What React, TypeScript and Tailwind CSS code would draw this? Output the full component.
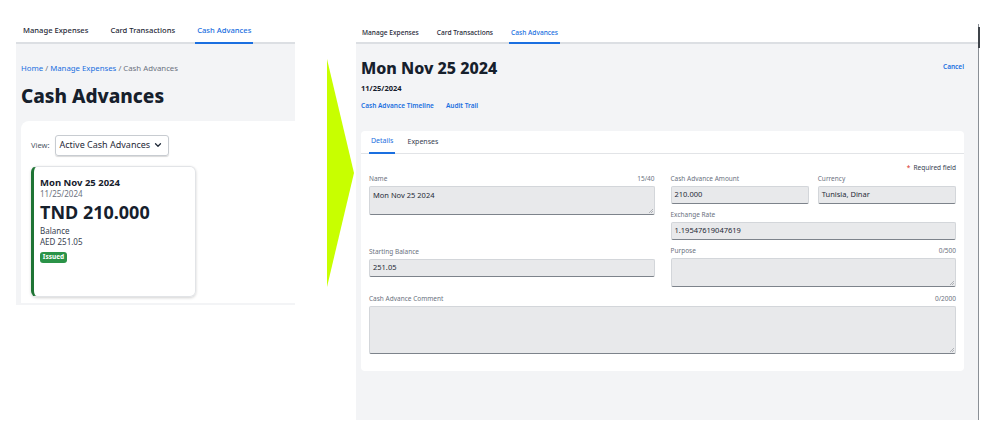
import { ChevronDown } from "lucide-react";

const blue = "text-[#1a6fe0]";

function Field({
  label,
  value,
  counter,
  h = "h-[18px]",
  area = false,
}: {
  label: string;
  value?: string;
  counter?: string;
  h?: string;
  area?: boolean;
}) {
  return (
    <div className="flex flex-col">
      <div className="flex h-[12px] items-center justify-between text-[6.5px] text-[#6b7280]">
        <span>{label}</span>
        {counter && <span>{counter}</span>}
      </div>
      <div
        className={`relative mt-[1px] ${h} rounded-[2px] border border-[#d3d6da] border-b-[#7d838b] border-b-dashed bg-[#e8e9eb] px-[3px] text-[7.5px] text-[#1f2937] ${
          area ? "pt-[3px]" : "flex items-center"
        }`}
      >
        {value}
        {area && (
          <svg
            className="absolute bottom-[1px] right-[1px]"
            width="5"
            height="5"
            viewBox="0 0 5 5"
          >
            <path d="M5 1L1 5M5 3L3 5" stroke="#8a8f96" strokeWidth="0.6" />
          </svg>
        )}
      </div>
    </div>
  );
}

export default function App() {
  return (
    <div className="flex h-[435px] w-[999px] bg-white font-['Noto_Sans',sans-serif]">
      {/* left screenshot */}
      <div className="ml-[16px] flex h-[305px] w-[279px] flex-col">
        <div className="mt-[20px] flex h-[24px] items-stretch gap-[18px] border-b-2 border-[#dcdfe3] pl-[5px] text-[7.6px] font-medium text-[#1f2937]">
          <div className="flex items-center px-[2px]">Manage Expenses</div>
          <div className="flex items-center px-[2px]">Card Transactions</div>
          <div className={`-mb-[2px] flex items-center border-b-2 border-[#1a6fe0] px-[2px] ${blue}`}>
            Cash Advances
          </div>
        </div>
        <div className="flex flex-1 flex-col bg-[#f3f4f6] pb-[2px]">
          <div className="mt-[19px] pl-[5px] text-[7.8px] text-[#6b7280]">
            <span className={blue}>Home</span> /{" "}
            <span className={blue}>Manage Expenses</span> / Cash Advances
          </div>
          <div className="mt-[8px] pl-[5px] text-[19px] font-extrabold leading-[26px] text-[#16202c]">
            Cash Advances
          </div>
          <div className="ml-[5px] mt-[12px] flex-1 rounded-tl-[8px] bg-white pl-[10px] pt-[14px]">
            <div className="flex items-center gap-[6px]">
              <span className="text-[7.5px] text-[#4b5563]">View:</span>
              <div className="flex h-[21px] w-[114px] items-center justify-between whitespace-nowrap rounded-[3px] border border-[#c8ccd1] pl-[3px] pr-[5px] text-[9px] text-[#1f2937] shadow-[0_1px_1px_rgba(0,0,0,0.15)]">
                Active Cash Advances
                <ChevronDown size={10} strokeWidth={3} />
              </div>
            </div>
            <div className="mt-[10px] flex h-[131px] w-[165px] flex-col rounded-[6px] border border-[#e2e4e7] border-l-[3px] border-l-[#1e7434] pl-[6px] pt-[9px] shadow-[0_1px_3px_rgba(0,0,0,0.18)]">
              <div className="text-[9.5px] font-bold leading-[13px] text-[#16202c]">Mon Nov 25 2024</div>
              <div className="text-[8px] leading-[10px] text-[#6b7280]">11/25/2024</div>
              <div className="mt-[1px] text-[18px] font-bold leading-[24px] text-[#16202c]">TND 210.000</div>
              <div className="mt-[1px] text-[8px] leading-[11px] text-[#374151]">Balance</div>
              <div className="text-[8px] leading-[11px] text-[#374151]">AED 251.05</div>
              <div className="mt-[5px] flex h-[11px] w-[27px] items-center justify-center rounded-[3px] bg-[#2b9348] text-[6.5px] font-bold text-white">
                Issued
              </div>
            </div>
          </div>
        </div>
      </div>

      {/* arrow */}
      <svg className="ml-[32px] mt-[58px] shrink-0" width="28" height="230" viewBox="0 0 28 230">
        <polygon points="0,1 27,115 0,229" fill="#c8ff00" />
      </svg>

      {/* right screenshot */}
      <div className="ml-[1px] flex h-[420px] w-[623px] flex-col">
        <div className="mt-[24px] flex h-[20px] items-stretch gap-[14px] border-b-2 border-r border-[#dcdfe3] border-r-[#8a8f96] pl-[4px] text-[6.6px] font-medium text-[#1f2937]">
          <div className="flex items-center px-[2px]">Manage Expenses</div>
          <div className="flex items-center px-[2px]">Card Transactions</div>
          <div className={`-mb-[2px] flex items-center border-b-2 border-[#1a6fe0] px-[2px] ${blue}`}>
            Cash Advances
          </div>
        </div>
        <div className="relative flex flex-1 flex-col border-r border-[#8a8f96] bg-[#f3f4f6] pl-[5px] pr-[14px]">
          <div className="absolute -right-[2px] -top-[17px] h-[21px] w-[2px] bg-[#3f444a]" />
          <div className="mt-[12px] flex items-start justify-between">
            <div className="text-[16px] font-extrabold leading-[24px] text-[#16202c]">Mon Nov 25 2024</div>
            <div className={`mt-[6px] text-[6.5px] font-semibold ${blue}`}>Cancel</div>
          </div>
          <div className="mt-[2px] text-[7.5px] font-bold leading-[12px] text-[#16202c]">11/25/2024</div>
          <div className={`mt-[7px] flex gap-[12px] text-[6.5px] font-semibold leading-[10px] ${blue}`}>
            <span>Cash Advance Timeline</span>
            <span>Audit Trail</span>
          </div>
          <div className="mt-[20px] h-[240px] rounded-[4px] bg-white">
            <div className="flex h-[23px] items-stretch gap-[10px] border-b border-[#e2e4e7] pl-[8px] text-[7px] text-[#374151]">
              <div className={`-mb-[1px] flex items-center border-b-2 border-[#1a6fe0] px-[2px] ${blue}`}>Details</div>
              <div className="flex items-center px-[2px]">Expenses</div>
            </div>
            <div className="px-[8px]">
              <div className="mt-[9px] flex justify-end text-[6.5px] text-[#374151]">
                <span className="mr-[3px] text-[#d92d20]">*</span>Required field
              </div>
              <div className="grid grid-cols-2 gap-x-[16px]">
                <div className="flex flex-col">
                  <Field label="Name" counter="15/40" value="Mon Nov 25 2024" h="h-[29px]" area />
                  <div className="mt-[31px]">
                    <Field label="Starting Balance" value="251.05" />
                  </div>
                </div>
                <div className="flex flex-col gap-[5px]">
                  <div className="grid grid-cols-2 gap-x-[9px]">
                    <Field label="Cash Advance Amount" value="210.000" />
                    <Field label="Currency" value="Tunisia, Dinar" />
                  </div>
                  <Field label="Exchange Rate" value="1.19547619047619" />
                  <Field label="Purpose" counter="0/500" h="h-[29px]" area />
                </div>
              </div>
              <div className="mt-[6px]">
                <Field label="Cash Advance Comment" counter="0/2000" h="h-[48px]" area />
              </div>
            </div>
          </div>
        </div>
      </div>
    </div>
  );
}
